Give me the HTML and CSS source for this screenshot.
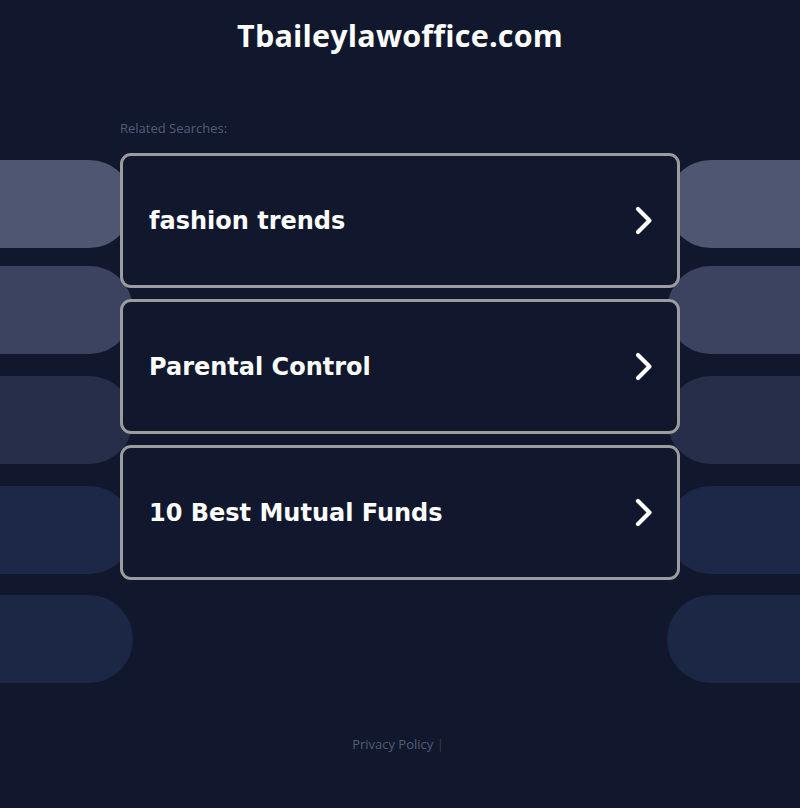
FILE: index.html
```html
<!DOCTYPE html>
<html lang="en">
<head>
<meta charset="utf-8">
<title>Tbaileylawoffice.com</title>
<link rel="stylesheet" href="styles.css">
</head>
<body>
<div class="deco" aria-hidden="true">
  <div class="deco-col deco-left">
    <span class="pill p1"></span>
    <span class="pill p2"></span>
    <span class="pill p3"></span>
    <span class="pill p4"></span>
    <span class="pill p5"></span>
  </div>
  <div class="deco-col deco-right">
    <span class="pill p1"></span>
    <span class="pill p2"></span>
    <span class="pill p3"></span>
    <span class="pill p4"></span>
    <span class="pill p5"></span>
  </div>
</div>
<div class="page">
  <h1 class="title">Tbaileylawoffice.com</h1>
  <main class="content">
    <div class="label">Related Searches:</div>
    <div class="cards">
      <a class="card" href="#"><span class="card-text">fashion trends</span>
        <svg class="chev" width="24" height="32" viewBox="0 0 24 32"><polyline points="6,4 17.5,15.5 6,27" fill="none" stroke="#fff" stroke-width="4.2" stroke-linecap="round" stroke-linejoin="round"/></svg></a>
      <a class="card" href="#"><span class="card-text">Parental Control</span>
        <svg class="chev" width="24" height="32" viewBox="0 0 24 32"><polyline points="6,4 17.5,15.5 6,27" fill="none" stroke="#fff" stroke-width="4.2" stroke-linecap="round" stroke-linejoin="round"/></svg></a>
      <a class="card" href="#"><span class="card-text">10 Best Mutual Funds</span>
        <svg class="chev" width="24" height="32" viewBox="0 0 24 32"><polyline points="6,4 17.5,15.5 6,27" fill="none" stroke="#fff" stroke-width="4.2" stroke-linecap="round" stroke-linejoin="round"/></svg></a>
    </div>
  </main>
  <footer class="footer"><a href="#" class="footer-link">Privacy Policy</a> <span class="sep">|</span></footer>
</div>
</body>
</html>
```
FILE: styles.css
```css
html, body {
  margin: 0;
  padding: 0;
}
body {
  background: #11172c;
  width: 800px;
  height: 808px;
  overflow: hidden;
  position: relative;
  font-family: "Open Sans", "DejaVu Sans", sans-serif;
}
.deco {
  position: absolute;
  inset: 0;
  overflow: hidden;
  z-index: 0;
}
.deco-col {
  position: absolute;
  top: 160px;
  display: flex;
  flex-direction: column;
  gap: 22px;
}
.deco-left { left: -70px; }
.deco-right { right: -70px; }
.pill {
  display: block;
  width: 203px;
  height: 88px;
  border-radius: 44px;
}
.p1 { background: #4e5672; margin-bottom: -4px; }
.p2 { background: #3b4360; }
.p3 { background: #262e4a; }
.p4 { background: #1d2747; }
.p5 { background: #1c2745; margin-top: -1px; }
.page {
  position: relative;
  z-index: 1;
}
.title {
  margin: 0;
  padding-top: 15px;
  height: 40px;
  line-height: 40px;
  text-align: center;
  color: #ffffff;
  font-family: "Open Sans", sans-serif;
  font-weight: 700;
  font-size: 30.5px;
  letter-spacing: 0.2px;
}
.content {
  width: 560px;
  margin: 0 auto;
  padding-top: 64px;
}
.label {
  font-size: 13px;
  line-height: 18px;
  color: #545c7a;
  margin-bottom: 16px;
}
.cards {
  display: flex;
  flex-direction: column;
  gap: 11px;
}
.card {
  box-sizing: border-box;
  height: 135px;
  border: 3px solid #9c9c9f;
  border-radius: 11px;
  background: #11172c;
  display: flex;
  align-items: center;
  justify-content: space-between;
  padding: 0 21px 0 26px;
  text-decoration: none;
}
.card-text {
  color: #ffffff;
  font-family: "DejaVu Sans", sans-serif;
  font-weight: 700;
  font-size: 24px;
}
.chev {
  display: block;
}
.footer {
  text-align: center;
  margin-top: 155px;
  font-size: 13px;
  line-height: 18px;
  color: #545c7a;
  padding-right: 4px;
}
.footer-link {
  color: #545c7a;
  text-decoration: none;
}
.sep {
  color: #3a4260;
}
```
